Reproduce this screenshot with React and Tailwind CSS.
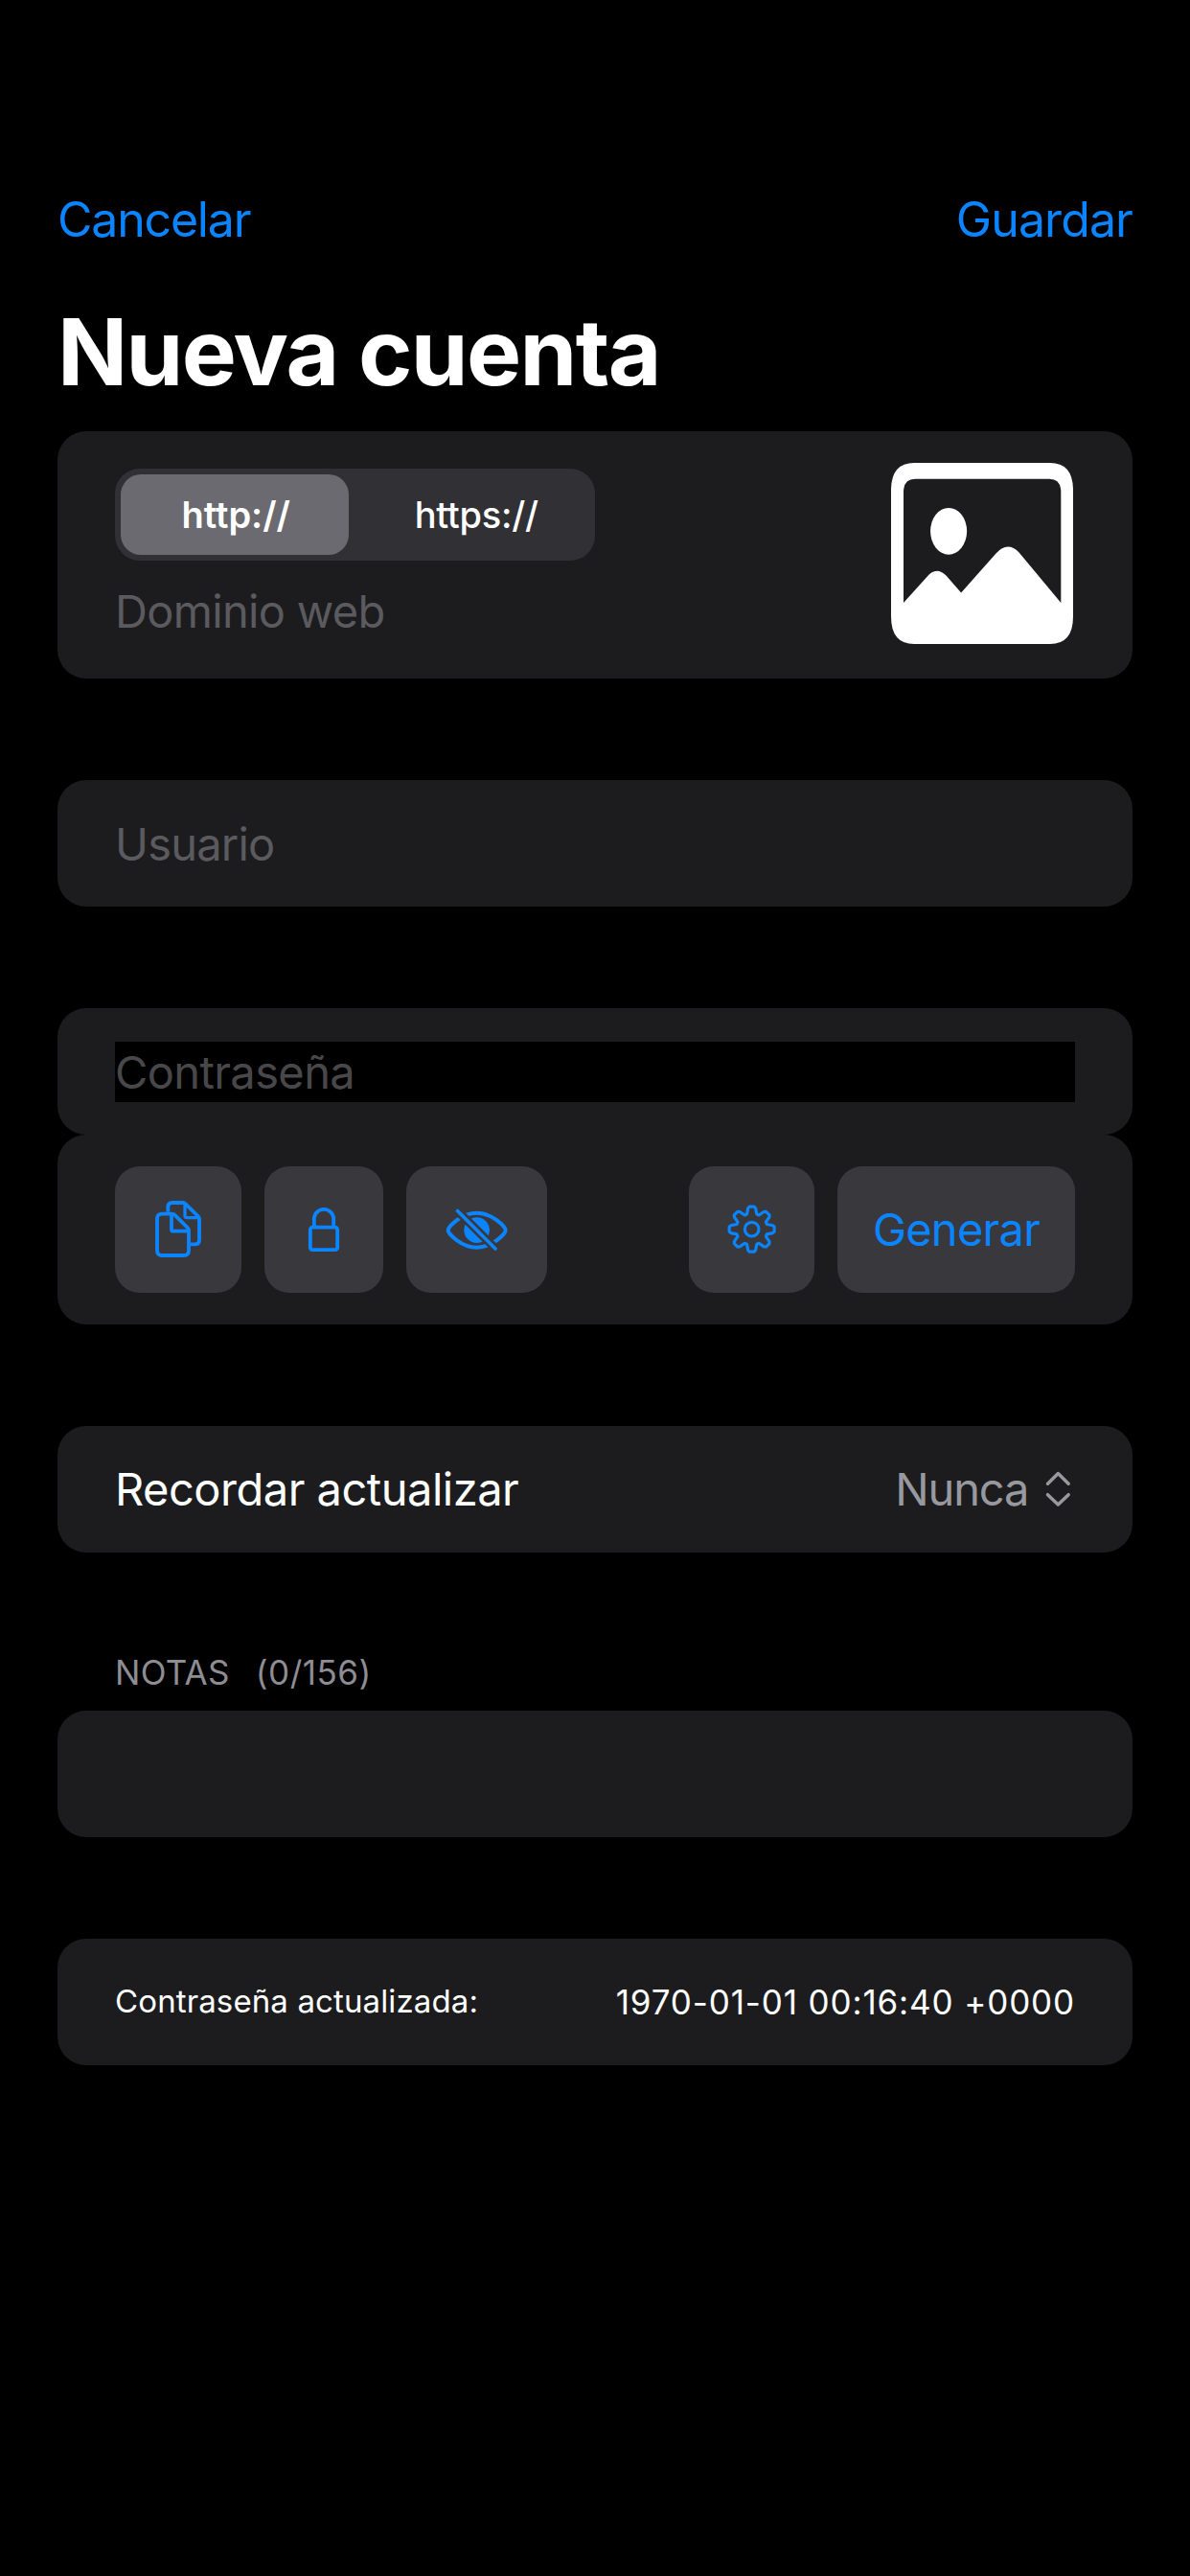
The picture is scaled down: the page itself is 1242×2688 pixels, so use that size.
function PhotoIcon() {
  return (
    <svg viewBox="150 128 569 566" preserveAspectRatio="none" className="h-[189px] w-[190px]" aria-hidden="true">
      <path
        fill="#fff"
        fillRule="evenodd"
        d="M222 128H647Q719 128 719 214V608Q719 694 647 694H222Q150 694 150 608V214Q150 128 222 128Z
           M225 178Q189 178 189 220V565L262 484Q291 450 322 480L369 534L478 411Q514 371 550 408L681 565V220Q681 178 645 178Z"
      />
      <ellipse cx="330" cy="341.5" rx="57" ry="73" fill="#fff" />
    </svg>
  );
}

function CopyIcon() {
  return (
    <svg viewBox="180 156 156 189" className="h-[63px] w-[52px]" fill="none" stroke="#0a84ff" strokeWidth="11.5" strokeLinejoin="round" aria-hidden="true">
      <path d="M226 197V182Q226 168 240 168H272Q277 168 281 172L320 210Q324 214 324 220V284Q324 298 310 298H297" />
      <path d="M279 170V209Q279 215 285 215H322" strokeWidth="10" />
      <path d="M238 203H208Q192 203 192 219V317Q192 333 208 333H275Q291 333 291 317V256Q291 250 287 246L248 207Q244 203 238 203Z" />
      <path d="M237 205V251Q237 257 243 257H289" />
    </svg>
  );
}

function LockIcon() {
  return (
    <svg viewBox="660 174 108 150" className="h-[50px] w-[36px]" fill="none" stroke="#0a84ff" strokeWidth="11.5" aria-hidden="true">
      <rect x="671.5" y="242" width="85" height="70.5" rx="7" />
      <path d="M683.5 240V216A30.5 30.5 0 0 1 744.5 216V240" />
    </svg>
  );
}

function EyeSlashIcon() {
  return (
    <svg viewBox="190 178 202 141" className="h-[47px] w-[67.33px]" fill="none" aria-hidden="true">
      <path
        d="M201 249C201 238 243 195 291 195C339 195 381 238 381 249C381 260 339 303 291 303C243 303 201 260 201 249Z"
        stroke="#0a84ff"
        strokeWidth="12"
      />
      <circle cx="291" cy="249" r="40" fill="#0a84ff" />
      <path d="M217 175L363 320" stroke="#39383d" strokeWidth="27" />
      <path d="M230.500 188.500L349 307" stroke="#0a84ff" strokeWidth="11" strokeLinecap="round" />
    </svg>
  );
}

const TOOTH = [
  [-15.5, -47],
  [-11.8, -65.5],
  [-7.5, -70.5],
  [7.5, -70.5],
  [11.8, -65.5],
  [15.5, -47],
];

const gearPoints = Array.from({ length: 8 }, (_, i) => {
  const a = (i * Math.PI) / 4;
  return TOOTH.map(([x, y]) =>
    [x * Math.cos(a) - y * Math.sin(a), x * Math.sin(a) + y * Math.cos(a)].map((v) => v.toFixed(2)).join(",")
  ).join(" ");
}).join(" ");

function GearIcon() {
  return (
    <svg viewBox="-80 -80 160 160" className="size-[53.33px]" fill="none" stroke="#0a84ff" strokeWidth="9.5" strokeLinejoin="round" aria-hidden="true">
      <polygon points={gearPoints} />
      <circle r="22" />
    </svg>
  );
}

function UpDownIcon() {
  return (
    <svg viewBox="750 160 86 118" className="h-[39.33px] w-[28.67px]" fill="none" stroke="#98989f" strokeWidth="10.500" strokeLinecap="round" strokeLinejoin="round" aria-hidden="true">
      <path d="M760.500 202.500L793 170.500L825.500 202.500" />
      <path d="M760.500 237L793 268L825.500 237" />
    </svg>
  );
}

function Card({ className, children }) {
  return <section className={`flex rounded-[30px] bg-[#1c1c1e] px-[60px] ${className}`}>{children}</section>;
}

function Tile({ className, children, ...props }) {
  return (
    <button type="button" className={`flex h-[132px] items-center justify-center rounded-[26px] bg-[#39383d] ${className}`} {...props}>
      {children}
    </button>
  );
}

export default function App() {
  return (
    <main className="flex h-[2688px] w-[1242px] flex-col bg-black px-[60px] pt-[199px] font-['Inter',sans-serif] text-[47px] leading-[57px] whitespace-pre text-white">
      <nav className="flex h-[61px] items-center justify-between text-[50px] leading-[61px] text-[#0a84ff]">
        <button type="button" className="tracking-[-1.2px]">Cancelar</button>
        <button type="button" className="tracking-[-0.9px]">Guardar</button>
      </nav>

      <h1 className="mt-[49px] h-[116px] text-[96px] leading-[116px] font-bold tracking-[-1.6px]">Nueva cuenta</h1>

      <Card className="mt-[25px] h-[258px] justify-between">
        <div className="flex flex-col pt-[39px]">
          <div className="grid h-24 w-[501px] grid-cols-2 rounded-[26px] bg-[#313035] p-1.5 text-[38px] leading-[46px]">
            <span className="mr-[7px] flex items-center justify-center rounded-[21px] bg-[#6a6a70] pl-[3px] font-semibold">http://</span>
            <span className="flex items-center justify-center pl-[9px] font-medium tracking-[-0.25px]">https://</span>
          </div>
          <span className="mt-6 tracking-[-0.68px] text-[#5a5a5f]">Dominio web</span>
        </div>
        <div className="pt-[32.67px] pr-[2px]">
          <PhotoIcon />
        </div>
      </Card>

      <Card className="mt-[106px] h-[132px] items-center">
        <span className="tracking-[-0.8px] text-[#5a5a5f]">Usuario</span>
      </Card>

      <Card className="mt-[106px] h-[132px] items-start pt-[35px]">
        <div className="flex h-[63px] flex-1 items-center bg-black tracking-[-0.6px] text-[#48484a]">Contraseña</div>
      </Card>
      <Card className="h-[198px] items-center justify-between">
        <div className="flex gap-6">
          <Tile className="w-[132px] pb-px" aria-label="Copiar"><CopyIcon /></Tile>
          <Tile className="w-[124px]" aria-label="Bloquear"><LockIcon /></Tile>
          <Tile className="w-[147px]" aria-label="Ocultar"><EyeSlashIcon /></Tile>
        </div>
        <div className="flex gap-6">
          <Tile className="w-[131px]" aria-label="Ajustes"><GearIcon /></Tile>
          <Tile className="w-[248px] pb-[2px] tracking-[-0.75px] text-[#0a84ff]">Generar</Tile>
        </div>
      </Card>

      <Card className="mt-[106px] h-[132px] items-center justify-between">
        <span className="pb-[2px] tracking-[-0.49px]">Recordar actualizar</span>
        <span className="flex items-center gap-[17px] pr-[3px] text-[#98989f]">
          <span className="pb-[2px] tracking-[-1.1px]">Nunca</span>
          <UpDownIcon />
        </span>
      </Card>

      <div className="mt-[104px] flex h-[43px] items-center gap-[27px] px-[60px] text-[35px] leading-[43px] text-[#8d8d93]">
        <span className="tracking-[0.3px]">NOTAS</span>
        <span className="tracking-[0.5px]">(0/156)</span>
      </div>
      <Card className="mt-[18px] h-[132px]" />

      <Card className="mt-[106px] h-[132px] items-center justify-between">
        <span className="pb-[3px] text-[33px] leading-[40px] tracking-[0.12px]">Contraseña actualizada:</span>
        <span className="text-[35px] leading-[43px] tracking-[0.87px]">1970-01-01 00:16:40 +0000</span>
      </Card>
    </main>
  );
}
